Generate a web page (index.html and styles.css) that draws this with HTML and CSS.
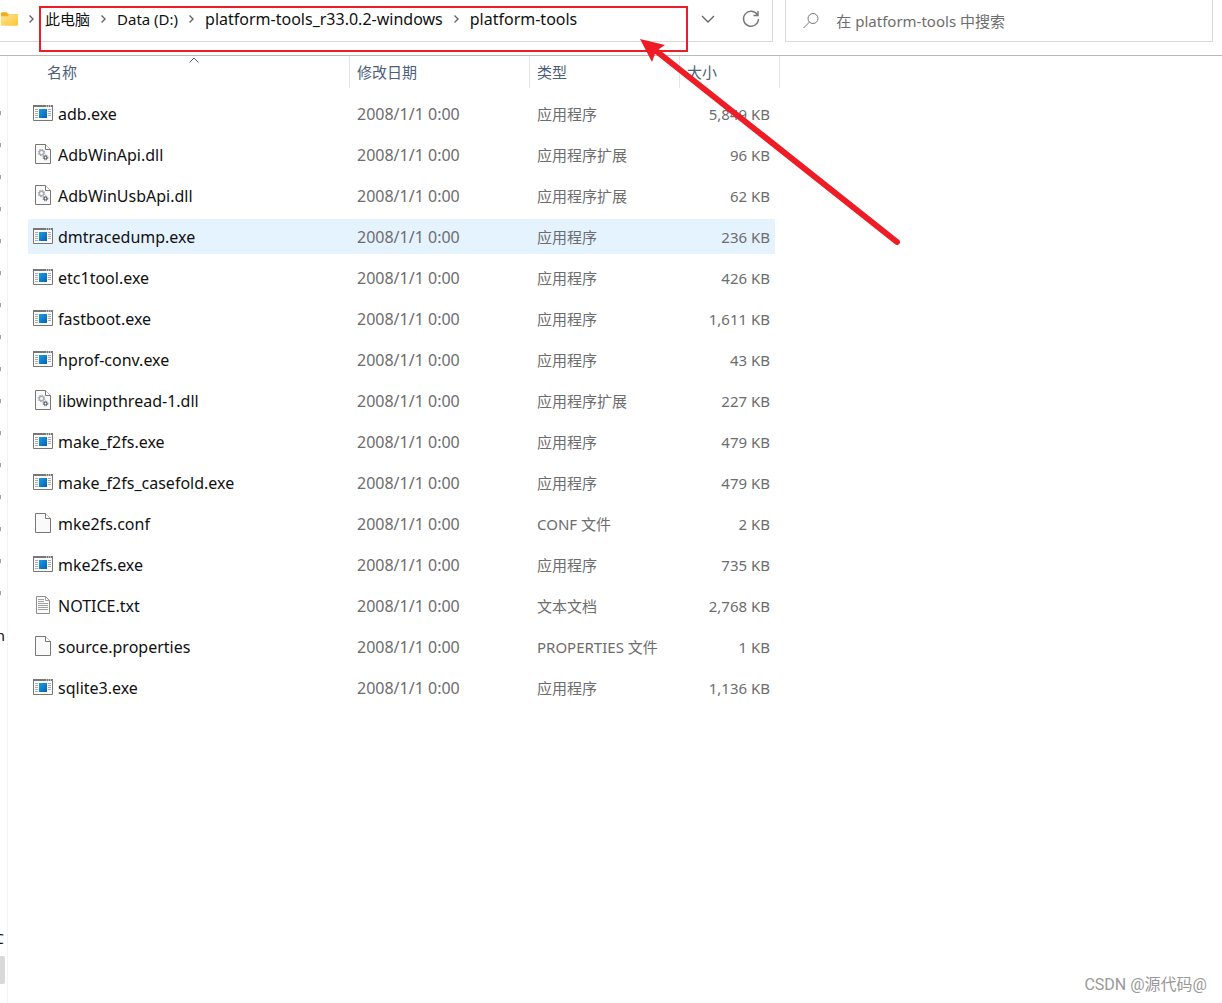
FILE: index.html
```
<!DOCTYPE html>
<html lang="zh-CN">
<head>
<meta charset="utf-8">
<title>platform-tools</title>
<meta name="viewport" content="width=device-width, initial-scale=1">
<link rel="stylesheet" href="styles.css">
</head>
<body>
<svg class="defs" aria-hidden="true">
  <defs>
    <linearGradient id="blue" x1="0" y1="0" x2="1" y2="1"><stop offset="0" stop-color="#1b9de2"/><stop offset="1" stop-color="#0560b6"/></linearGradient>
    <linearGradient id="gold" x1="0" y1="0" x2="1" y2="1"><stop offset="0" stop-color="#ffe59a"/><stop offset="1" stop-color="#fcc42f"/></linearGradient>
  </defs>
  <symbol id="exe" viewBox="0 0 20 20">
    <path d="M.5 2.500h19v15H.5z" fill="#fafafa" stroke="#797774"/>
    <path d="M0 2h20v2H0z" fill="#797774"/>
    <path d="M13 3h1M15 3h1M17 3h1" stroke="#fff"/>
    <path d="M2 6.500h3M2 8.500h3M2 10.500h3M2 12.500h3M2 14.500h3M15 6.500h3M15 8.500h3M15 10.500h3M15 12.500h3" stroke="#aaa"/>
    <path d="M6 6h8v9H6z" fill="url(#blue)"/>
  </symbol>
  <symbol id="page" viewBox="0 0 20 20">
    <path d="M2.500.5h10l5 5v14h-15z" fill="#fafafa" stroke="#797774"/>
    <path d="M12.500.5v5h5" fill="#fff" stroke="#797774"/>
  </symbol>
  <symbol id="dll" viewBox="0 0 20 20">
    <use href="#page"/>
    <circle cx="8.500" cy="8.500" r="2.200" fill="none" stroke="#a5adb5" stroke-width="1.400"/>
    <circle cx="8.500" cy="8.500" r="3.200" fill="none" stroke="#a5adb5" stroke-width="1.200" stroke-dasharray="1.250 1.260"/>
    <circle cx="12.500" cy="13.500" r="1.500" fill="none" stroke="#596066" stroke-width="1.200"/>
    <circle cx="12.500" cy="13.500" r="2.400" fill="none" stroke="#596066" stroke-width="1" stroke-dasharray="1 .88"/>
  </symbol>
  <symbol id="txt" viewBox="0 0 20 20">
    <path d="M3.500 1.500h9l4 4v13h-13z" fill="#fafafa" stroke="#8f8e8c"/>
    <path d="M12.500 1.500v4h4M5 4.500h6M5 6.500h6M5 8.500h10M5 10.500h10M5 12.500h10M5 14.500h10" fill="none" stroke="#a0a0a0"/>
  </symbol>
  <symbol id="sep" viewBox="0 0 27 16"><path d="M11.500 4.500 15 8l-3.500 3.500" fill="none" stroke="#666" stroke-width="1.400"/></symbol>
</svg>

<header class="toolbar">
  <div class="address">
    <nav class="crumbs" aria-label="地址">
      <svg class="folder" viewBox="0 0 19 16" aria-hidden="true"><path d="M1 2q0-1 1-1h5l2 2h9q1 0 1 1v9H1z" fill="#f3ae1c"/><path d="M1 5h7l2-2h9v11q0 1-1 1H2q-1 0-1-1z" fill="url(#gold)"/></svg>
      <svg class="sep" aria-hidden="true"><use href="#sep"/></svg>
      <a class="cjk" href="#">此电脑</a>
      <svg class="sep" aria-hidden="true"><use href="#sep"/></svg>
      <a class="cjk" href="#">Data (D:)</a>
      <svg class="sep" aria-hidden="true"><use href="#sep"/></svg>
      <a href="#">platform-tools_r33.0.2-windows</a>
      <svg class="sep" aria-hidden="true"><use href="#sep"/></svg>
      <a href="#">platform-tools</a>
    </nav>
    <button class="tool" type="button" aria-label="历史记录"><svg viewBox="0 0 20 20"><path d="m4 7 6 6 6-6" fill="none" stroke="#666" stroke-width="1.400"/></svg></button>
    <button class="tool" type="button" aria-label="刷新"><svg viewBox="0 0 20 20"><path d="M16.500 6A7.500 7.500 0 1 0 17.500 10M17 2v4.500h-4.500" fill="none" stroke="#777" stroke-width="1.400"/></svg></button>
  </div>
  <label class="search">
    <svg viewBox="0 0 18 18" aria-hidden="true"><circle cx="11" cy="6.500" r="5" fill="none" stroke="#777"/><path d="M7.500 10 1.500 16" stroke="#777"/></svg>
    <input type="text" aria-label="搜索" placeholder="在 platform-tools 中搜索">
  </label>
</header>

<div class="body">
  <aside class="side">
    <ul class="pins">
      <li></li><li></li><li></li><li></li><li></li><li></li><li></li><li></li>
      <li></li><li></li><li></li><li></li><li></li><li></li><li></li><li></li>
    </ul>
    <span class="cut">n</span>
    <span class="cut drive">C</span>
    <span class="thumb"></span>
  </aside>
  <main class="files">
    <table>
      <colgroup><col class="c-name"><col class="c-date"><col class="c-type"><col class="c-size"></colgroup>
      <thead>
        <tr>
          <th scope="col" aria-sort="ascending"><div class="first">名称<svg class="sort" viewBox="0 0 10 6" aria-hidden="true"><path d="m.5 5.500 4.500-4.500 4.500 4.500" fill="none" stroke="#666"/></svg></div></th>
          <th scope="col"><div>修改日期</div></th>
          <th scope="col"><div>类型</div></th>
          <th scope="col"><div>大小</div></th>
        </tr>
      </thead>
      <tbody>
        <tr><td><svg class="icon"><use href="#exe"/></svg>adb.exe</td><td>2008/1/1 0:00</td><td>应用程序</td><td>5,849 KB</td></tr>
        <tr><td><svg class="icon"><use href="#dll"/></svg>AdbWinApi.dll</td><td>2008/1/1 0:00</td><td>应用程序扩展</td><td>96 KB</td></tr>
        <tr><td><svg class="icon"><use href="#dll"/></svg>AdbWinUsbApi.dll</td><td>2008/1/1 0:00</td><td>应用程序扩展</td><td>62 KB</td></tr>
        <tr class="hover"><td><svg class="icon"><use href="#exe"/></svg>dmtracedump.exe</td><td>2008/1/1 0:00</td><td>应用程序</td><td>236 KB</td></tr>
        <tr><td><svg class="icon"><use href="#exe"/></svg>etc1tool.exe</td><td>2008/1/1 0:00</td><td>应用程序</td><td>426 KB</td></tr>
        <tr><td><svg class="icon"><use href="#exe"/></svg>fastboot.exe</td><td>2008/1/1 0:00</td><td>应用程序</td><td>1,611 KB</td></tr>
        <tr><td><svg class="icon"><use href="#exe"/></svg>hprof-conv.exe</td><td>2008/1/1 0:00</td><td>应用程序</td><td>43 KB</td></tr>
        <tr><td><svg class="icon"><use href="#dll"/></svg>libwinpthread-1.dll</td><td>2008/1/1 0:00</td><td>应用程序扩展</td><td>227 KB</td></tr>
        <tr><td><svg class="icon"><use href="#exe"/></svg>make_f2fs.exe</td><td>2008/1/1 0:00</td><td>应用程序</td><td>479 KB</td></tr>
        <tr><td><svg class="icon"><use href="#exe"/></svg>make_f2fs_casefold.exe</td><td>2008/1/1 0:00</td><td>应用程序</td><td>479 KB</td></tr>
        <tr><td><svg class="icon"><use href="#page"/></svg>mke2fs.conf</td><td>2008/1/1 0:00</td><td>CONF 文件</td><td>2 KB</td></tr>
        <tr><td><svg class="icon"><use href="#exe"/></svg>mke2fs.exe</td><td>2008/1/1 0:00</td><td>应用程序</td><td>735 KB</td></tr>
        <tr><td><svg class="icon"><use href="#txt"/></svg>NOTICE.txt</td><td>2008/1/1 0:00</td><td>文本文档</td><td>2,768 KB</td></tr>
        <tr><td><svg class="icon"><use href="#page"/></svg>source.properties</td><td>2008/1/1 0:00</td><td>PROPERTIES 文件</td><td>1 KB</td></tr>
        <tr><td><svg class="icon"><use href="#exe"/></svg>sqlite3.exe</td><td>2008/1/1 0:00</td><td>应用程序</td><td>1,136 KB</td></tr>
      </tbody>
    </table>
    <p class="credit">CSDN @源代码@</p>
  </main>
</div>

<svg class="marks" viewBox="0 0 920 260" aria-hidden="true">
  <path d="M40 7h647v44H40z" fill="none" stroke="#ee1c24" stroke-width="2"/>
  <path d="M655 50 897 242" stroke="#ee1c24" stroke-width="6" stroke-linecap="round"/>
  <path d="M640 39 665 45 656 51 652 62z" fill="#ee1c24"/>
</svg>
</body>
</html>
```
FILE: styles.css
```
* { box-sizing: border-box; }

body {
  position: relative;
  display: flex;
  flex-direction: column;
  min-height: 100vh;
  margin: 0;
  background: #fff;
  color: #111;
  font: 15px/20px "Noto Sans", "Noto Sans CJK SC", sans-serif;
}

.defs { position: absolute; width: 0; height: 0; }

/* Address bar and search */
.toolbar {
  display: flex;
  gap: 12px;
  height: 56px;
  padding: 0 9px 13px 0;
  border-bottom: 1px solid #b9b9b9;
}

.address {
  display: flex;
  flex: 773 1 0;
  min-width: 0;
  border: solid #d9d9d9;
  border-width: 0 1px 1px 0;
}

.crumbs {
  display: flex;
  flex: 1;
  align-items: center;
  min-width: 0;
  height: 38px;
  overflow: hidden;
  font-size: 16px;
  white-space: nowrap;
}

.crumbs a { color: inherit; text-decoration: none; }
.crumbs .cjk { font-size: 15px; }
.folder { flex: none; width: 18px; height: 16px; }
.sep { flex: none; width: 27px; height: 16px; }

.tool {
  width: 43px;
  height: 38px;
  padding: 0;
  border: 0;
  background: none;
}

.tool svg { display: block; width: 20px; height: 20px; margin: auto; }

.search {
  display: flex;
  flex: 394 1 34px;
  align-items: center;
  gap: 16px;
  min-width: 0;
  padding: 0 16px;
  border: solid #d9d9d9;
  border-width: 0 1px 1px;
}

.search svg { flex: none; width: 18px; height: 18px; }

.search input {
  flex: 1;
  min-width: 0;
  padding: 0;
  border: 0;
  outline: 0;
  background: none;
  font: inherit;
}

.search input::placeholder { color: #6d6d6d; opacity: 1; }

.body { display: flex; flex: 1; }

/* Strip of the navigation pane */
.side {
  display: flex;
  flex: none;
  flex-direction: column;
  align-items: flex-start;
  width: 8px;
  padding-top: 41px;
  overflow: hidden;
  border-right: 1px solid #f3f3f3;
}

.pins { margin: 0; padding: 0; list-style: none; }
.pins li { display: flex; align-items: center; height: 32px; }
.pins li::before { width: 1px; height: 4px; background: #9aa3ab; content: ""; }

.cut {
  display: flex;
  justify-content: flex-end;
  width: 5px;
  margin-top: 16px;
  overflow: hidden;
}

.drive { width: 4px; margin-top: 283px; }
.thumb { width: 5px; height: 28px; margin-top: 8px; border-radius: 0 2px 2px 0; background: #d9d9d9; }

/* File list */
.files {
  display: flex;
  flex: 1;
  flex-direction: column;
  min-width: 0;
  padding-left: 20px;
}

table { width: 752px; border-collapse: separate; border-spacing: 0; table-layout: fixed; }
.c-name { width: 322px; }
.c-date { width: 180px; }
.c-type { width: 150px; }
.c-size { width: 100px; }

th {
  height: 37px;
  padding: 0;
  color: #4c607a;
  font-weight: 400;
  text-align: left;
  vertical-align: top;
}

th div { position: relative; height: 32px; padding: 6px 7px; border-right: 1px solid #e5e5e5; }
th .first { padding-left: 19px; }
.sort { position: absolute; top: 1px; left: 161px; width: 10px; height: 6px; }

td {
  height: 41px;
  padding: 0 7px;
  border: solid transparent;
  border-width: 3px 0;
  background-clip: padding-box;
  color: #6d6d6d;
  white-space: nowrap;
}

td:first-child { padding-left: 5px; border-radius: 3px 0 0 3px; color: #111; }
td:first-child, td:nth-child(2) { font-size: 16px; }
td:last-child { padding-right: 5px; border-right-width: 5px; text-align: right; }
.hover td { background-color: #e5f3ff; }

.icon { width: 20px; height: 20px; margin-right: 5px; vertical-align: -3px; }

.credit { align-self: flex-end; margin: auto 15px 8px; color: #999; font: 16px/20px Roboto, "Noto Sans CJK SC", sans-serif; }

/* Red annotation drawn over the window */
.marks { position: absolute; top: 0; left: 0; width: 920px; height: 260px; pointer-events: none; }
```
